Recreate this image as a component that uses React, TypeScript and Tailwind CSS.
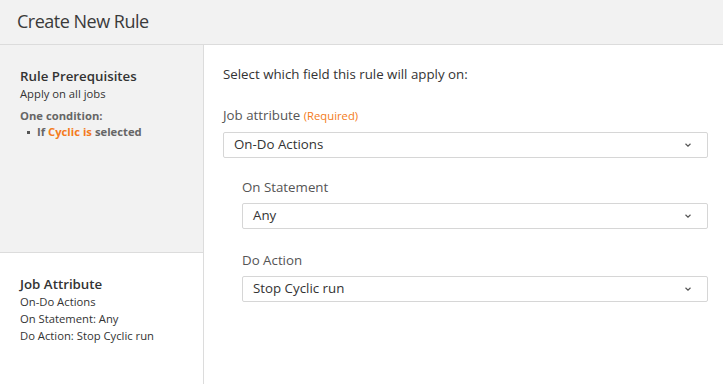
import React from "react";

const Chevron = () => (
  <svg width="8" height="6" viewBox="0 0 8 6" className="shrink-0">
    <path d="M1.5 1.8 L4 4.1 L6.5 1.8" fill="none" stroke="#555" strokeWidth="1.2" />
  </svg>
);

const Select = ({ value }: { value: string }) => (
  <div className="flex h-[26px] items-center justify-between rounded-[2px] border border-[#d6d6d6] bg-white pl-[10px] pr-[15px] text-[13.3px] text-[#333]">
    <span>{value}</span>
    <Chevron />
  </div>
);

export default function App() {
  return (
    <div
      className="flex h-[384px] w-[723px] flex-col overflow-hidden bg-white text-[#333]"
      style={{ fontFamily: '"Open Sans", sans-serif' }}
    >
      <div className="flex h-[45px] shrink-0 items-center border-b border-[#dcdcdc] bg-[#f2f2f2] pb-[1px] pl-[17px] text-[18px] tracking-[-0.5px] text-[#3a3a3a]">
        Create New Rule
      </div>
      <div className="flex flex-1">
        <div className="flex w-[204px] shrink-0 flex-col border-r border-[#dcdcdc]">
          <div className="h-[208px] border-b border-[#dcdcdc] bg-[#f2f2f2] pl-[20px] pt-[21px]">
            <div className="text-[13.3px] font-semibold leading-[20px] text-[#333]">Rule Prerequisites</div>
            <div className="text-[11.25px] leading-[16px] text-[#333]">Apply on all jobs</div>
            <div className="mt-[7px] text-[11.25px] font-bold leading-[14px] text-[#666]">One condition:</div>
            <div className="mt-[1px] flex items-center text-[11.25px] font-bold leading-[16px] text-[#666]">
              <span className="ml-[7px] mr-[7px] inline-block h-[3px] w-[3px] bg-[#555]" />
              <span>
                If <span className="text-[#f47b20]">Cyclic is</span> selected
              </span>
            </div>
          </div>
          <div className="pl-[20px] pt-[23px]">
            <div className="text-[13.3px] font-semibold leading-[17px] text-[#333]">Job Attribute</div>
            <div className="text-[11.25px] leading-[17px] text-[#333]">On-Do Actions</div>
            <div className="text-[11.25px] leading-[17px] text-[#333]">On Statement: Any</div>
            <div className="text-[11.25px] leading-[17px] text-[#333]">Do Action: Stop Cyclic run</div>
          </div>
        </div>
        <div className="flex-1 pl-[19px] pr-[15px] pt-[19px]">
          <div className="text-[13.3px] leading-[20px] text-[#333]">Select which field this rule will apply on:</div>
          <div className="mt-[21px] text-[13.3px] leading-[20px] text-[#555]">
            Job attribute <span className="text-[11.25px] text-[#f47b20]">(Required)</span>
          </div>
          <div className="mt-[6px]">
            <Select value="On-Do Actions" />
          </div>
          <div className="pl-[19px]">
            <div className="mt-[19px] text-[13.3px] leading-[20px] text-[#555]">On Statement</div>
            <div className="mt-[6px]">
              <Select value="Any" />
            </div>
            <div className="mt-[21px] text-[13.3px] leading-[20px] text-[#555]">Do Action</div>
            <div className="mt-[6px]">
              <Select value="Stop Cyclic run" />
            </div>
          </div>
        </div>
      </div>
    </div>
  );
}
